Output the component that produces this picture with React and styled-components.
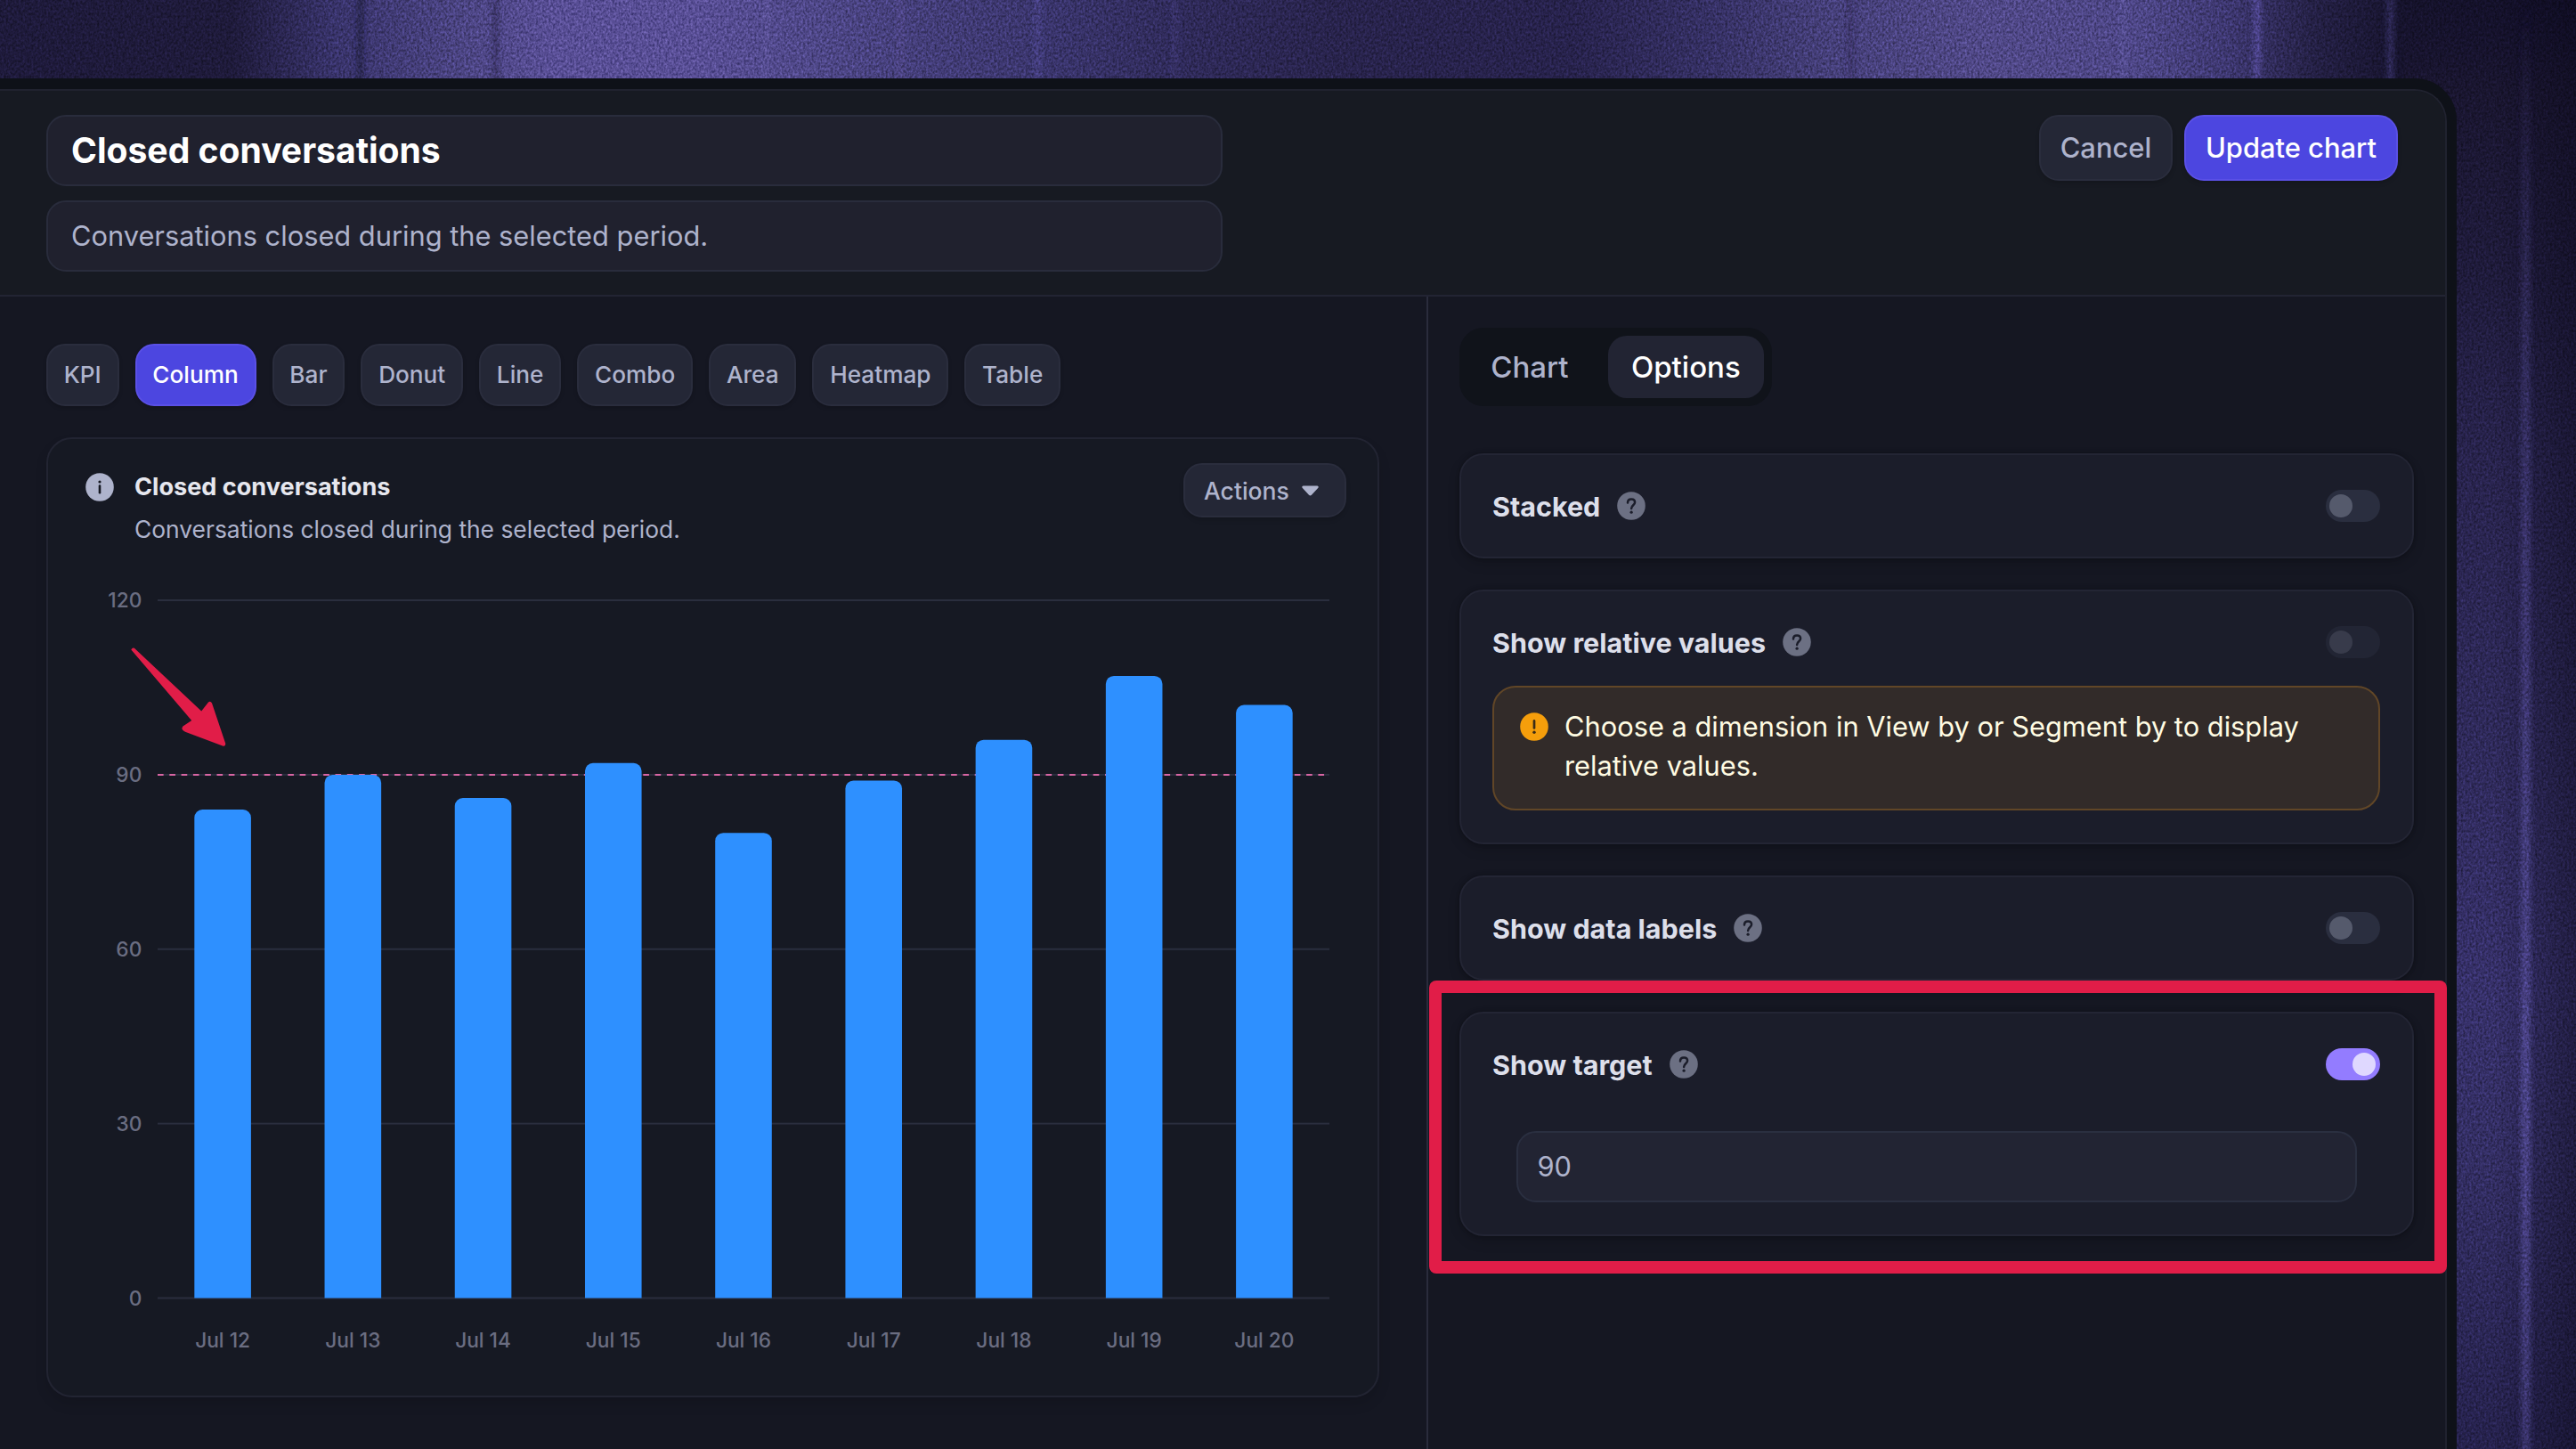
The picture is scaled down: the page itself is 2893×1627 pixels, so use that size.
import styled, { createGlobalStyle } from "styled-components";

const chartTypes = ["KPI", "Column", "Bar", "Donut", "Line", "Combo", "Area", "Heatmap", "Table"];

const data = [
  { day: "Jul 12", value: 84 },
  { day: "Jul 13", value: 90 },
  { day: "Jul 14", value: 86 },
  { day: "Jul 15", value: 92 },
  { day: "Jul 16", value: 80 },
  { day: "Jul 17", value: 89 },
  { day: "Jul 18", value: 96 },
  { day: "Jul 19", value: 107 },
  { day: "Jul 20", value: 102 },
];

const ticks = [120, 90, 60, 30, 0];
const target = 90;

// plot area inside the chart svg
const plot = { left: 123, right: 1439, top: 56, bottom: 839.5 };
const barWidth = 63.6;
const step = (plot.right - plot.left) / data.length;
const yOf = (v) => plot.bottom - (v / 120) * (plot.bottom - plot.top);

const barPath = (x, y) => {
  const r = 9;
  return `M${x} ${plot.bottom}V${y + r}a${r} ${r} 0 0 1 ${r} ${-r}h${barWidth - 2 * r}a${r} ${r} 0 0 1 ${r} ${r}V${plot.bottom}Z`;
};

const ColumnChart = () => (
  <ChartSvg viewBox="0 0 1493 949">
    {ticks.map((t) => (
      <g key={t}>
        <rect x={plot.left} y={yOf(t) - 1} width={plot.right - plot.left} height="2" fill="#2a2e3e" />
        <AxisText x="105.3" y={yOf(t) + 8.3} textAnchor="end">
          {t}
        </AxisText>
      </g>
    ))}
    <line
      x1={plot.left}
      x2={plot.right}
      y1={yOf(target)}
      y2={yOf(target)}
      stroke="#d765a3"
      strokeWidth="2"
      strokeDasharray="6.65 6.65"
    />
    {data.map((d, i) => {
      const cx = plot.left + step * (i + 0.5);
      return (
        <g key={d.day}>
          <path d={barPath(cx - barWidth / 2, yOf(d.value))} fill="#2e90ff" />
          <AxisText x={cx} y="894.5" textAnchor="middle">
            {d.day}
          </AxisText>
        </g>
      );
    })}
    <path
      d="M93.3 111.5Q95.3 108 98.2 111L172.2 180.5L180 170.6Q182.3 168.6 184 171.6L199.3 217Q199.3 220.6 196 219.4L154 203.8Q148.4 201 151.4 197.6L161.2 191Z"
      fill="#e11d48"
    />
  </ChartSvg>
);

const InfoIcon = () => (
  <Icon viewBox="0 0 32 32">
    <circle cx="16" cy="16" r="15.8" fill="#aeb3cc" />
    <circle cx="16" cy="10" r="1.6" fill="#161923" />
    <path d="M16 14.6v7.6" stroke="#161923" strokeWidth="2.6" strokeLinecap="round" />
  </Icon>
);

const HelpIcon = () => (
  <Icon viewBox="0 0 32 32">
    <circle cx="16" cy="16" r="15.8" fill="#6c7083" />
    <path
      d="M12 12.4c0-2.5 1.8-4 4.1-4s4 1.5 4 3.7c0 3.1-4 3.3-4 6.8"
      fill="none"
      stroke="#1b1d2a"
      strokeWidth="2.5"
      strokeLinecap="round"
    />
    <circle cx="16.1" cy="23.2" r="1.6" fill="#1b1d2a" />
  </Icon>
);

const AlertIcon = () => (
  <Icon viewBox="0 0 32 32">
    <circle cx="16" cy="16" r="15.8" fill="#f59e0b" />
    <path d="M16 9.4v8" stroke="#3a2c17" strokeWidth="2.7" strokeLinecap="round" />
    <circle cx="16" cy="22.2" r="1.7" fill="#3a2c17" />
  </Icon>
);

const Curtain = () => (
  <CurtainSvg viewBox="0 0 2893 1627" preserveAspectRatio="none">
    <defs>
      <linearGradient id="folds" x1="0" x2="1" y1="0" y2="0">
        <stop offset="0" stopColor="#1e1a3b" />
        <stop offset=".09" stopColor="#1e1a3a" />
        <stop offset=".13" stopColor="#38336a" />
        <stop offset=".18" stopColor="#4b4482" />
        <stop offset=".215" stopColor="#584e95" />
        <stop offset=".27" stopColor="#584e95" />
        <stop offset=".32" stopColor="#4d4686" />
        <stop offset=".36" stopColor="#433d78" />
        <stop offset=".41" stopColor="#39346b" />
        <stop offset=".46" stopColor="#2f2a59" />
        <stop offset=".52" stopColor="#28234c" />
        <stop offset=".61" stopColor="#27224c" />
        <stop offset=".66" stopColor="#342f62" />
        <stop offset=".71" stopColor="#453f79" />
        <stop offset=".77" stopColor="#504887" />
        <stop offset=".83" stopColor="#4d4686" />
        <stop offset=".865" stopColor="#3d3770" />
        <stop offset=".9" stopColor="#231f43" />
        <stop offset=".935" stopColor="#15122b" />
        <stop offset="1" stopColor="#120f28" />
      </linearGradient>
      <linearGradient id="side" x1="0" x2="0" y1="0" y2="1">
        <stop offset="0" stopColor="#171330" stopOpacity="0" />
        <stop offset=".06" stopColor="#19152f" />
        <stop offset=".2" stopColor="#1f1b3c" />
        <stop offset=".32" stopColor="#28234d" />
        <stop offset=".5" stopColor="#2e2959" />
        <stop offset=".68" stopColor="#363069" />
        <stop offset=".8" stopColor="#332e63" />
        <stop offset="1" stopColor="#25214c" />
      </linearGradient>
      <linearGradient id="edge" x1="0" x2="1" y1="0" y2="0">
        <stop offset="0" stopColor="#0c0a1c" stopOpacity="0" />
        <stop offset="1" stopColor="#0c0a1c" stopOpacity=".5" />
      </linearGradient>
      <linearGradient id="glow" x1="0" x2="0" y1="0" y2="1">
        <stop offset="0" stopColor="#5a51a0" stopOpacity="0" />
        <stop offset=".18" stopColor="#5a51a0" stopOpacity=".3" />
        <stop offset=".5" stopColor="#5a51a0" stopOpacity=".55" />
        <stop offset=".75" stopColor="#5f56a8" stopOpacity=".7" />
        <stop offset="1" stopColor="#5a51a0" stopOpacity=".5" />
      </linearGradient>
      <filter id="soft" x="-200%" width="500%" y="0" height="100%">
        <feGaussianBlur stdDeviation="3 0" />
      </filter>
      <filter id="grain" x="0" y="0" width="100%" height="100%" colorInterpolationFilters="sRGB">
        <feTurbulence type="fractalNoise" baseFrequency=".42 .34" numOctaves="2" seed="4" />
        <feColorMatrix values="1 0 0 0 0 1 0 0 0 0 1 0 0 0 0 0 0 0 0 1" />
      </filter>
    </defs>
    <rect width="2893" height="1627" fill="url(#folds)" />
    <rect x="2700" y="0" width="193" height="1627" fill="url(#side)" />
    <rect x="2800" width="93" height="1627" fill="url(#edge)" />
    <g filter="url(#soft)">
      <rect x="402" width="5" height="100" fill="#1b1736" opacity=".8" />
      <rect x="554" width="5" height="100" fill="#2a2550" opacity=".8" />
      <rect x="858" width="6" height="100" fill="#6a60ac" opacity=".3" />
      <rect x="1008" width="6" height="100" fill="#6057a0" opacity=".3" />
      <rect x="1162" width="7" height="100" fill="#5850a0" opacity=".4" />
      <rect x="1317" width="6" height="100" fill="#5850a0" opacity=".25" />
      <rect x="2076" width="5" height="100" fill="#2a2550" opacity=".5" />
      <rect x="2382" width="5" height="100" fill="#6a60ac" opacity=".4" />
      <rect x="2531" width="8" height="100" fill="#6057ae" opacity=".6" />
      <rect x="2681" width="7" height="100" fill="#5850a0" opacity=".4" />
      <rect x="2832" y="0" width="9" height="1627" fill="url(#glow)" />
    </g>
    <Grain width="2893" height="1627" filter="url(#grain)" />
  </CurtainSvg>
);

const Option = ({ title, on, disabled, children }) => (
  <OptionCard>
    <OptionRow>
      <OptionTitle>{title}</OptionTitle>
      <HelpIcon />
      <Toggle $on={on} $disabled={disabled}>
        <Knob $on={on} />
      </Toggle>
    </OptionRow>
    {children}
  </OptionCard>
);

const App = () => {
  return (
    <>
      <GlobalStyle />
      <Page>
        <Curtain />
        <Frame>
          <Editor>
            <Header>
              <Fields>
                <TitleField>Closed conversations</TitleField>
                <Field>Conversations closed during the selected period.</Field>
              </Fields>
              <Buttons>
                <Button $width="150px">Cancel</Button>
                <Button $width="240px" $primary>
                  Update chart
                </Button>
              </Buttons>
            </Header>
            <Body>
              <Preview>
                <Chips>
                  {chartTypes.map((type) => (
                    <Chip key={type} $active={type === "Column"}>
                      {type}
                    </Chip>
                  ))}
                </Chips>
                <ChartCard>
                  <ChartHeader>
                    <InfoIcon />
                    <ChartTitles>
                      <ChartTitle>Closed conversations</ChartTitle>
                      <ChartSubtitle>Conversations closed during the selected period.</ChartSubtitle>
                    </ChartTitles>
                    <Actions>
                      Actions
                      <Caret viewBox="0 0 19 12">
                        <path d="M1.6 0.5h15.8q2 .4 1 2.2l-7.4 8q-1.5 1.4-3 0l-7.4-8q-1-1.8 1-2.2z" fill="#aeb3cc" />
                      </Caret>
                    </Actions>
                  </ChartHeader>
                  <ColumnChart />
                </ChartCard>
              </Preview>
              <Options>
                <Tabs>
                  <Tab>Chart</Tab>
                  <Tab $active>Options</Tab>
                </Tabs>
                <OptionList>
                  <Option title="Stacked" />
                  <Option title="Show relative values" disabled>
                    <Alert>
                      <AlertIcon />
                      <AlertText>Choose a dimension in View by or Segment by to display relative values.</AlertText>
                    </Alert>
                  </Option>
                  <Option title="Show data labels" />
                  <Option title="Show target" on>
                    <TargetField>{target}</TargetField>
                    <Highlight />
                  </Option>
                </OptionList>
              </Options>
            </Body>
          </Editor>
        </Frame>
      </Page>
    </>
  );
};

const GlobalStyle = createGlobalStyle`
  * {
    box-sizing: border-box;
  }
  body {
    margin: 0;
    background: #15122b;
    font-family: Inter, "Liberation Sans", sans-serif;
  }
`;

const Page = styled.div`
  position: relative;
  width: 2893px;
  height: 1627px;
  padding-top: 88px;
  overflow: hidden;
`;

const CurtainSvg = styled.svg`
  position: absolute;
  top: 0;
  left: 0;
  width: 100%;
  height: 100%;
`;

const Grain = styled.rect`
  mix-blend-mode: overlay;
  opacity: 0.55;
`;

const Frame = styled.div`
  position: relative;
  width: 2759px;
  height: 1539px;
  padding: 12px 11px 0 0;
  background: #0e1118;
  border-top-right-radius: 47px;
`;

const Editor = styled.div`
  display: flex;
  flex-direction: column;
  height: 100%;
  background: #151722;
  border-top: 2px solid #20222f;
  border-right: 2px solid #20222f;
  border-top-right-radius: 36px;
`;

const Header = styled.div`
  display: flex;
  justify-content: space-between;
  align-items: flex-start;
  flex: none;
  height: 231px;
  padding: 27px 53px 0 52px;
  background: #171a22;
  border-bottom: 2px solid #222433;
  border-top-right-radius: 34px;
`;

const Fields = styled.div`
  display: flex;
  flex-direction: column;
  gap: 16px;
  width: 1321px;
`;

const Field = styled.div`
  display: flex;
  align-items: center;
  height: 80px;
  padding: 0 26px 1px;
  color: #aeb3cc;
  font-size: 30.8px;
  background: #20212e;
  border: 2px solid #292c3c;
  border-radius: 22px;
`;

const TitleField = styled(Field)`
  padding-bottom: 2px;
  color: #fff;
  font-size: 39.1px;
  font-weight: 650;
`;

const TargetField = styled(Field)`
  margin: 54px 26px 0 27px;
  padding: 0 21.5px 1px;
  background: #222433;
  border-color: #2a2f40;
`;

const Buttons = styled.div`
  display: flex;
  gap: 13px;
`;

const Button = styled.div`
  display: flex;
  align-items: center;
  justify-content: center;
  width: ${(p) => p.$width};
  height: 74px;
  padding-bottom: 1px;
  color: ${(p) => (p.$primary ? "#fff" : "#aeb3cc")};
  font-size: 30.9px;
  font-weight: 500;
  background: ${(p) => (p.$primary ? "#4c46e0" : "#242736")};
  border: 2px solid ${(p) => (p.$primary ? "#5a50e6" : "#2a2d3d")};
  border-radius: 22px;
  box-shadow: 0 3px 5px rgba(0, 0, 0, 0.14);
`;

const Body = styled.div`
  display: flex;
  flex: 1;
`;

const Preview = styled.div`
  flex: none;
  width: 1604px;
  padding: 53px 53px 0 52px;
  border-right: 2px solid #2a2c3c;
`;

const Chips = styled.div`
  display: flex;
  gap: 18px;
`;

const Chip = styled.div`
  display: flex;
  align-items: center;
  height: 70px;
  padding: 0 17.8px 2px;
  color: ${(p) => (p.$active ? "#fff" : "#aeb3cc")};
  font-size: 26.2px;
  font-weight: 500;
  background: ${(p) => (p.$active ? "#4c46e0" : "#242736")};
  border: 2px solid ${(p) => (p.$active ? "#5a50e6" : "#2a2d3d")};
  border-radius: 21px;
  box-shadow: 0 2px 4px rgba(0, 0, 0, 0.18);
`;

const ChartCard = styled.div`
  width: 1497px;
  height: 1078px;
  margin-top: 35px;
  background: #161923;
  border: 2px solid #222432;
  border-radius: 29px;
  box-shadow: 0 8px 14px rgba(0, 0, 0, 0.12);
`;

const ChartHeader = styled.div`
  display: flex;
  align-items: flex-start;
  height: 125px;
  padding: 27px 35px 0 41.5px;

  > svg {
    margin-top: 11px;
  }
`;

const ChartTitles = styled.div`
  flex: 1;
  margin: 2px 0 0 23.5px;
  line-height: 48px;
`;

const ChartTitle = styled.div`
  padding-top: 1px;
  margin-bottom: -1px;
  color: #e6e7ee;
  font-size: 27.1px;
  font-weight: 650;
`;

const ChartSubtitle = styled.div`
  color: #aeb3cc;
  font-size: 26.4px;
`;

const Actions = styled.div`
  display: flex;
  align-items: center;
  gap: 14px;
  width: 183px;
  height: 61px;
  padding-left: 21px;
  color: #aeb3cc;
  font-size: 26.5px;
  font-weight: 500;
  background: #242736;
  border: 2px solid #2a2d3d;
  border-radius: 21px;
  box-shadow: 0 3px 5px rgba(0, 0, 0, 0.14);
`;

const Caret = styled.svg`
  width: 19px;
  height: 12px;
`;

const ChartSvg = styled.svg`
  display: block;
  width: 1493px;
  height: 949px;
`;

const AxisText = styled.text`
  fill: #6a6d81;
  font-family: Inter, "Liberation Sans", sans-serif;
  font-size: 22.7px;
  font-weight: 550;
`;

const Icon = styled.svg`
  flex: none;
  width: 32px;
  height: 32px;
`;

const Options = styled.div`
  flex: 1;
  padding: 35px 35px 0 35px;
`;

const Tabs = styled.div`
  display: flex;
  gap: 18px;
  width: fit-content;
  padding: 9px;
  background: #10131a;
  border-radius: 27px;
`;

const Tab = styled.div`
  display: flex;
  align-items: center;
  height: 70px;
  padding: 0 26.2px;
  color: ${(p) => (p.$active ? "#fff" : "#aeb3cc")};
  font-size: 33px;
  font-weight: 500;
  background: ${(p) => (p.$active ? "#222433" : "transparent")};
  border-radius: 21px;
`;

const OptionList = styled.div`
  display: flex;
  flex-direction: column;
  gap: 35px;
  margin-top: 53px;
`;

const OptionCard = styled.div`
  position: relative;
  padding: 36px 36px 36px 35px;
  background: #1b1d2a;
  border: 2px solid #232534;
  border-radius: 27px;
  box-shadow: 0 0 4px rgba(0, 0, 0, 0.3), 0 6px 14px rgba(0, 0, 0, 0.16);
`;

const OptionRow = styled.div`
  display: flex;
  align-items: center;
  gap: 19px;
  height: 42px;
`;

const OptionTitle = styled.div`
  color: #dddfea;
  font-size: 30.5px;
  font-weight: 650;
`;

const Toggle = styled.div`
  width: 61px;
  height: 36px;
  margin-left: auto;
  padding: 5px 4px;
  background: ${(p) => (p.$on ? "#937cff" : "#2a2e3f")};
  border-radius: 18px;
  opacity: ${(p) => (p.$disabled ? 0.5 : 1)};
`;

const Knob = styled.div`
  width: 26px;
  height: 26px;
  margin-left: ${(p) => (p.$on ? "26px" : "0")};
  background: ${(p) => (p.$on ? "#dfd8ff" : "#555a6c")};
  border-radius: 50%;
`;

const Alert = styled.div`
  display: flex;
  gap: 18.5px;
  height: 140px;
  margin-top: 28px;
  padding: 22px 28.5px;
  background: #322b29;
  border: 2px solid #614627;
  border-radius: 26px;

  > svg {
    margin-top: 6px;
  }
`;

const AlertText = styled.div`
  width: 880px;
  color: #fffbe2;
  font-size: 30.8px;
  line-height: 44px;
`;

// callout around the target setting
const Highlight = styled.div`
  position: absolute;
  inset: -37px -39px -44px -36px;
  border: 14px solid #e11d48;
  border-radius: 8px;
`;

export default App;
